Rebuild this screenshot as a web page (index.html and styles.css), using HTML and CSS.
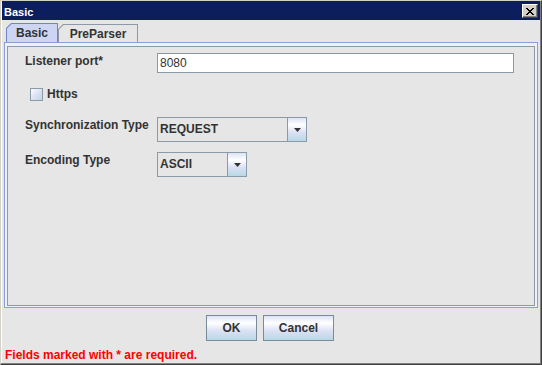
FILE: index.html
```html
<!DOCTYPE html>
<html>
<head>
<meta charset="utf-8">
<link rel="stylesheet" href="styles.css">
</head>
<body>
<div class="window">
  <div class="titlebar">
    <span class="title">Basic</span>
    <span class="close">
      <svg class="close-glyph" width="8" height="7" viewBox="0 0 8 7"><path d="M0 0h2v1H0zM6 0h2v1H6zM1 1h2v1H1zM5 1h2v1H5zM2 2h4v1H2zM3 3h2v1H3zM2 4h4v1H2zM1 5h2v1H1zM5 5h2v1H5zM0 6h2v1H0zM6 6h2v1H6z" fill="#000"/></svg>
    </span>
  </div>
  <div class="main">
    <div class="tabs">
      <div class="tab tab-selected"><div class="tab-inner">Basic</div></div>
      <div class="tab tab-plain"><div class="tab-inner">PreParser</div></div>
    </div>
    <div class="tabcontent">
      <div class="panel">
        <div class="row row-port">
          <span class="lbl">Listener port*</span>
          <div class="textfield">8080</div>
        </div>
        <div class="row row-check">
          <span class="checkbox"></span>
          <span class="check-label">Https</span>
        </div>
        <div class="row row-sync">
          <span class="lbl">Synchronization Type</span>
          <div class="combo combo-wide">
            <span class="combo-value">REQUEST</span>
            <span class="combo-btn"><svg width="7" height="4" viewBox="0 0 7 4"><path d="M0 0h7L3.5 4z" fill="#333"/></svg></span>
          </div>
        </div>
        <div class="row row-enc">
          <span class="lbl">Encoding Type</span>
          <div class="combo combo-narrow">
            <span class="combo-value">ASCII</span>
            <span class="combo-btn"><svg width="7" height="4" viewBox="0 0 7 4"><path d="M0 0h7L3.5 4z" fill="#333"/></svg></span>
          </div>
        </div>
      </div>
    </div>
    <div class="buttons">
      <button class="btn btn-ok">OK</button>
      <button class="btn btn-cancel">Cancel</button>
    </div>
    <div class="footer">Fields marked with * are required.</div>
  </div>
</div>
</body>
</html>
```
FILE: styles.css
```css
* { box-sizing: border-box; }
html, body { margin: 0; padding: 0; }
body {
  width: 542px;
  height: 365px;
  font-family: "Liberation Sans", Arial, sans-serif;
  font-size: 12px;
  font-weight: bold;
  color: #333333;
  background: #e6e6e6;
  overflow: hidden;
}
.window {
  width: 542px;
  height: 365px;
  display: flex;
  flex-direction: column;
  border: 1px solid;
  border-color: #d4d0c8 #404040 #404040 #d4d0c8;
  box-shadow: inset -1px -1px 0 #808080, inset 1px 1px 0 #ffffff;
  background: #e6e6e6;
}
.titlebar {
  height: 19px;
  margin: 0 1px;
  background: #0c1e5c;
  display: flex;
  justify-content: space-between;
  align-items: flex-start;
}
.title {
  color: #ffffff;
  font-size: 11px;
  line-height: 16px;
  padding: 3px 0 0 2px;
}
.close {
  width: 16px;
  height: 14px;
  margin: 3px 2px 0 0;
  background: #d4d0c8;
  border: 1px solid;
  border-color: #ffffff #404040 #404040 #ffffff;
  box-shadow: inset -1px -1px 0 #808080;
  display: flex;
  align-items: center;
  justify-content: center;
}
.close-glyph { display: block; shape-rendering: crispEdges; }
.main {
  flex: 1;
  display: flex;
  flex-direction: column;
  padding: 0 3px 1px 3px;
}
.tabs {
  height: 22px;
  display: flex;
  align-items: flex-end;
  padding-left: 2px;
}
.tab {
  padding: 1px 1px 0 1px;
  clip-path: polygon(5px 0, 100% 0, 100% 100%, 0 100%, 0 5px);
}
.tab-inner {
  height: 100%;
  display: flex;
  align-items: center;
  justify-content: center;
  clip-path: polygon(4.6px 0, 100% 0, 100% 100%, 0 100%, 0 4.6px);
}
.tab-selected {
  width: 52px;
  height: 19px;
  background: #6f86c8;
}
.tab-selected .tab-inner { background: #cdd5f3; }
.tab-plain {
  width: 80px;
  height: 18px;
  background: #8a9aa6;
}
.tab-plain .tab-inner { background: #e6e6e6; }
.tabcontent {
  flex: 1;
  display: flex;
  border: 1px solid #8b9ed8;
  background: #eef0fa;
  padding: 3px 2px 1px 2px;
}
.panel {
  flex: 1;
  border: 1px solid #8a9aa6;
  background: #e6e6e6;
  padding: 6px 20px 0 17px;
}
.row {
  display: flex;
  align-items: flex-start;
}
.lbl {
  width: 132px;
  flex: none;
  line-height: 17px;
}
.textfield {
  flex: 1;
  height: 20px;
  border: 1px solid #8a9aa6;
  background: #ffffff;
  font-weight: normal;
  padding-left: 2px;
  line-height: 18px;
}
.row-check {
  margin-top: 15px;
  height: 13px;
  padding-left: 5px;
  align-items: center;
}
.checkbox {
  width: 13px;
  height: 13px;
  border: 1px solid #8a9aa6;
  background: linear-gradient(135deg, #ffffff 0%, #dfe4f6 45%, #c0d4e6 100%);
}
.check-label {
  margin-left: 4px;
  line-height: 13px;
}
.row-sync { margin-top: 16px; }
.row-enc { margin-top: 10px; }
.combo {
  height: 25px;
  border: 1px solid #8a9aa6;
  background: #e6e6e6;
  display: flex;
}
.combo-wide { width: 150px; }
.combo-narrow { width: 90px; }
.combo-value {
  flex: 1;
  padding-left: 2px;
  line-height: 23px;
}
.combo-btn {
  width: 19px;
  border-left: 1px solid #8a9aa6;
  background: linear-gradient(#dde2f5 0%, #ffffff 30%, #dde2f5 60%, #b8d8e6 100%);
  display: flex;
  align-items: center;
  justify-content: center;
}
.combo-btn svg { display: block; }
.buttons {
  margin-top: 7px;
  height: 26px;
  display: flex;
  justify-content: center;
  gap: 6px;
  padding-right: 2px;
}
.btn {
  height: 26px;
  font: inherit;
  color: #333333;
  border: 1px solid #7a8a99;
  background: linear-gradient(#dde2f5 0%, #ffffff 30%, #dde2f5 60%, #b8d8e6 100%);
  padding: 0;
  margin: 0;
}
.btn-ok { width: 51px; }
.btn-cancel { width: 71px; }
.footer {
  margin-top: 7px;
  height: 15px;
  line-height: 15px;
  color: #ff0000;
  padding-left: 1px;
}
```
